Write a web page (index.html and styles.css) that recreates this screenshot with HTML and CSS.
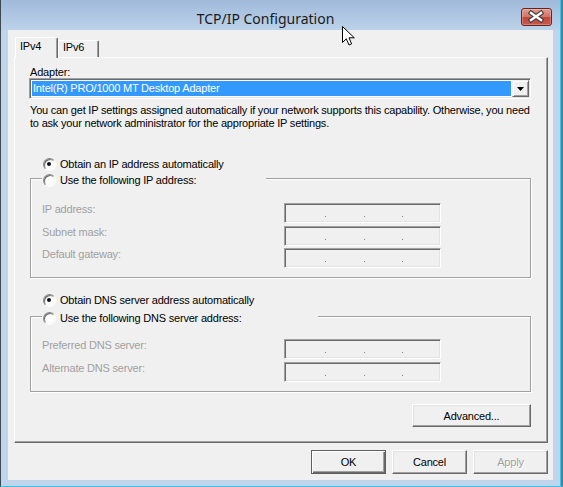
FILE: index.html
```
<!DOCTYPE html>
<html>
<head>
<meta charset="utf-8">
<title>TCP/IP Configuration</title>
<link rel="stylesheet" href="styles.css">
</head>
<body>
<div class="window">
  <div class="titlebar">
    <div class="title">TCP/IP Configuration</div>
    <div class="close">
      <svg width="29" height="16" viewBox="0 0 29 16">
        <path d="M9 4 L19 11 M19 4 L9 11" stroke="#3f3f3f" stroke-width="4.6" stroke-linecap="square" fill="none"/>
        <path d="M9 4 L19 11 M19 4 L9 11" stroke="#ffffff" stroke-width="2.4" stroke-linecap="square" fill="none"/>
      </svg>
    </div>
  </div>
  <div class="client">
    <div class="tabs">
      <div class="tab active">IPv4</div>
      <div class="tab v6">IPv6</div>
    </div>
    <div class="panel">
      <div class="adapter-label">Adapter:</div>
      <div class="combo">
        <div class="combo-sel">Intel(R) PRO/1000 MT Desktop Adapter</div>
        <div class="combo-btn">
          <svg width="7" height="4" viewBox="0 0 7 4"><path d="M0 0 H7 L3.5 4 Z" fill="#000"/></svg>
        </div>
      </div>
      <p class="desc">You can get IP settings assigned automatically if your network supports this capability. Otherwise, you need<br>to ask your network administrator for the appropriate IP settings.</p>

      <div class="radio-row ip"><span class="radio checked"></span>Obtain an IP address automatically</div>
      <div class="group ip">
        <div class="legend ip"><span class="radio"></span>Use the following IP address:</div>
        <div class="fields ip">
          <div class="flabel">IP address:</div>
          <div class="ipfield"><span class="dot"></span><span class="dot"></span><span class="dot"></span></div>
          <div class="flabel">Subnet mask:</div>
          <div class="ipfield"><span class="dot"></span><span class="dot"></span><span class="dot"></span></div>
          <div class="flabel">Default gateway:</div>
          <div class="ipfield"><span class="dot"></span><span class="dot"></span><span class="dot"></span></div>
        </div>
      </div>

      <div class="radio-row dns"><span class="radio checked"></span>Obtain DNS server address automatically</div>
      <div class="group dns">
        <div class="legend dns"><span class="radio"></span>Use the following DNS server address:</div>
        <div class="fields dns">
          <div class="flabel">Preferred DNS server:</div>
          <div class="ipfield"><span class="dot"></span><span class="dot"></span><span class="dot"></span></div>
          <div class="flabel">Alternate DNS server:</div>
          <div class="ipfield"><span class="dot"></span><span class="dot"></span><span class="dot"></span></div>
        </div>
      </div>

      <div class="adv-row"><button class="btn adv">Advanced...</button></div>
    </div>
    <div class="footer">
      <button class="btn default">OK</button>
      <button class="btn">Cancel</button>
      <button class="btn disabled">Apply</button>
    </div>
  </div>
  <svg class="cursor" width="14" height="21" viewBox="0 0 14 21">
    <path d="M0.5 0.5 L0.5 16.5 L4.3 12.8 L7 19 L9.6 17.9 L7 11.8 L12.3 11.8 Z" fill="#fff" stroke="#000" stroke-width="1" stroke-linejoin="miter"/>
  </svg>
</div>
</body>
</html>
```
FILE: styles.css
```
* { box-sizing: border-box; }

body {
  margin: 0;
  font-family: "Liberation Sans", Arial, sans-serif;
  font-size: 11px;
  letter-spacing: -0.2px;
  color: #000;
  background: #bfd5ec;
}

.window {
  position: relative;
  width: 563px;
  height: 487px;
  background: #bfd5ec;
  border-left: 1px solid #3e4854;
  border-right: 2px solid #6c7988;
  border-bottom: 1px solid #35c4ef;
  box-shadow: inset -1px 0 0 #35c4ef;
  overflow: hidden;
}

.titlebar {
  height: 30px;
  margin-right: 1px;
  display: flex;
  align-items: flex-start;
  background: linear-gradient(#a0bad9, #bcd2ea);
}

.title {
  flex: 1;
  text-align: center;
  padding-left: 9px;
  padding-top: 9px;
  font-family: "Noto Sans", "DejaVu Sans", sans-serif;
  font-size: 14px;
  letter-spacing: 0;
  line-height: 20px;
  color: #1a1a1a;
}

.close {
  margin-top: 8px;
  margin-right: 8px;
  width: 31px;
  height: 18px;
  border: 1px solid #6a231d;
  border-radius: 3px;
  background: linear-gradient(#e29a8e 0%, #d47568 48%, #c2473a 52%, #c8584a 100%);
  box-shadow: inset 0 0 0 1px rgba(255, 255, 255, 0.25);
}

.close svg { display: block; }

.client {
  margin-left: 7px;
  width: 545px;
  height: 450px;
  background: #f0f0f0;
  overflow: hidden;
}

.tabs {
  display: flex;
  align-items: flex-end;
  height: 20px;
  margin-top: 7px;
  margin-left: 7px;
}

.tab {
  height: 17px;
  border-top: 1px solid #fff;
  border-left: 1px solid #fff;
  border-right: 1px solid #696969;
  border-radius: 2px 2px 0 0;
  box-shadow: inset -1px 0 0 #a0a0a0;
  background: #f0f0f0;
  line-height: 13px;
  padding: 0 0 0 4px;
  width: 41px;
}

.tab.active {
  position: relative;
  z-index: 1;
  height: 21px;
  width: 43px;
  margin-bottom: -1px;
  padding-top: 2px;
}

.panel {
  margin-left: 6px;
  width: 534px;
  height: 386px;
  border: 1px solid;
  border-color: #fff #696969 #696969 #fff;
  box-shadow: inset -1px -1px 0 #a0a0a0;
  padding: 8px 16px 0 14px;
}

.adapter-label {
  line-height: 12px;
  padding-left: 1px;
}

.combo {
  height: 21px;
  display: flex;
  border: 1px solid;
  border-color: #a0a0a0 #fff #fff #a0a0a0;
  box-shadow: inset 1px 1px 0 #696969, inset -1px -1px 0 #e3e3e3;
  padding: 1px;
  background: #fff;
}

.combo-sel {
  flex: 1;
  margin: 1px;
  background: #3399ff;
  color: #fff;
  line-height: 15px;
  padding-left: 1px;
  white-space: nowrap;
}

.combo-btn {
  width: 17px;
  border: 1px solid;
  border-color: #f0f0f0 #696969 #696969 #f0f0f0;
  box-shadow: inset 1px 1px 0 #fff, inset -1px -1px 0 #a0a0a0;
  background: #f0f0f0;
  display: flex;
  align-items: center;
  justify-content: center;
}

.combo-btn svg { display: block; }

.desc {
  margin: 5px 0 0 1px;
  line-height: 13px;
  white-space: nowrap;
}

.radio-row {
  display: flex;
  align-items: center;
  height: 16px;
  line-height: 16px;
  margin-left: 14px;
  white-space: nowrap;
}

.radio-row.ip { margin-top: 26px; }
.radio-row.dns { margin-top: 14px; }

.radio {
  position: relative;
  flex: none;
  width: 13px;
  height: 13px;
  margin-right: 4px;
  border-radius: 50%;
  border: 1px solid;
  border-color: #8a8a8a #ffffff #ffffff #8a8a8a;
  box-shadow: inset 1px 1px 0 #696969;
  background: radial-gradient(circle at 50% 50%, #ffffff 45%, #ebebeb 100%);
}

.radio.checked::after {
  content: "";
  position: absolute;
  left: 3px;
  top: 3px;
  width: 4px;
  height: 4px;
  border-radius: 50%;
  background: #111;
}

.group {
  margin-left: 1px;
  border: 1px solid #a0a0a0;
  box-shadow: inset 1px 1px 0 #fff, 1px 1px 0 #fff;
  padding: 0 0 9px 11px;
}

.group.ip { margin-top: 6px; }
.group.dns { margin-top: 8px; }

.legend {
  display: flex;
  align-items: center;
  height: 16px;
  line-height: 16px;
  margin-top: -7px;
  padding-left: 1px;
  background: #f0f0f0;
  white-space: nowrap;
}

.legend.ip { width: 224px; }
.legend.dns { width: 276px; }

.fields {
  display: grid;
  grid-template-columns: 242px 157px;
}

.fields.ip { margin-top: 15px; row-gap: 2.5px; }
.fields.dns { margin-top: 13px; row-gap: 3px; }

.flabel {
  color: #a0a0a0;
  line-height: 13px;
  white-space: nowrap;
}

.ipfield {
  height: 20px;
  border: 1px solid;
  border-color: #a0a0a0 #fff #fff #a0a0a0;
  box-shadow: inset 1px 1px 0 #696969, inset -1px -1px 0 #e3e3e3;
  background: #f0f0f0;
  display: flex;
  align-items: flex-start;
  gap: 37.5px;
  padding: 12px 0 0 40px;
}

.dot {
  width: 1px;
  height: 1px;
  background: #7d8794;
}

.adv-row {
  display: flex;
  justify-content: flex-end;
  margin-top: 12px;
}

.btn {
  appearance: none;
  margin: 0;
  padding: 0;
  font-family: "Liberation Sans", Arial, sans-serif;
  font-size: 11px;
  letter-spacing: -0.2px;
  color: #000;
  width: 75px;
  height: 24px;
  border: 1px solid;
  border-color: #fff #696969 #696969 #fff;
  box-shadow: inset -1px -1px 0 #a0a0a0, inset 1px 1px 0 #e3e3e3;
  background: #f0f0f0;
  border-radius: 0;
  text-align: center;
}

.btn.adv {
  width: 119px;
  height: 23px;
}

.btn.default {
  border: 1px solid #5f5f5f;
  box-shadow: inset 1px 1px 0 #fff, inset -1px -1px 0 #696969, inset -2px -2px 0 #a0a0a0;
}

.btn.disabled {
  color: #a0a0a0;
  text-shadow: 1px 1px 0 #fff;
}

.footer {
  display: flex;
  justify-content: flex-end;
  gap: 6px;
  margin-top: 7px;
  padding-right: 5px;
}

.cursor {
  position: absolute;
  left: 341px;
  top: 26px;
}
```
